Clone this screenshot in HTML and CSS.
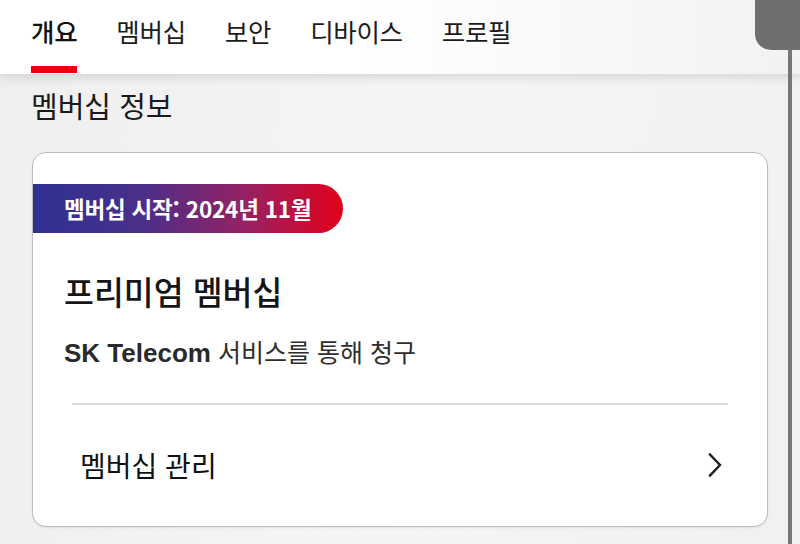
FILE: index.html
```html
<!DOCTYPE html>
<html lang="ko">
<head>
<meta charset="utf-8">
<title>멤버십 정보</title>
<link rel="stylesheet" href="styles.css">
</head>
<body>
<div class="page">
  <nav class="tabs">
    <div class="tab active"><span class="tab-label">개요</span><span class="tab-bar"></span></div>
    <div class="tab"><span class="tab-label">멤버십</span><span class="tab-bar"></span></div>
    <div class="tab"><span class="tab-label">보안</span><span class="tab-bar"></span></div>
    <div class="tab"><span class="tab-label">디바이스</span><span class="tab-bar"></span></div>
    <div class="tab"><span class="tab-label">프로필</span><span class="tab-bar"></span></div>
  </nav>
  <main class="content">
    <h2 class="section-title">멤버십 정보</h2>
    <section class="card">
      <div class="badge">멤버십 시작: 2024년 11월</div>
      <h3 class="plan">프리미엄 멤버십</h3>
      <p class="billing"><span class="brand">SK Telecom</span> 서비스를 통해 청구</p>
      <div class="divider"></div>
      <div class="manage-row">
        <span class="manage-label">멤버십 관리</span>
        <svg class="chevron" width="16" height="26" viewBox="0 0 16 26"><path d="M3 2.5 L13 13 L3 23.5" fill="none" stroke="#1e1e1e" stroke-width="2.4" stroke-linecap="square"/></svg>
      </div>
    </section>
  </main>
  <div class="edge-tab"></div>
  <div class="edge-line"></div>
</div>
</body>
</html>
```

FILE: styles.css
```css
* { box-sizing: border-box; }
html, body { margin: 0; padding: 0; }
body {
  font-family: "Noto Sans CJK KR", "Noto Sans", sans-serif;
  background: #f3f3f3;
  color: #111;
}
.page {
  position: relative;
  width: 800px;
  height: 544px;
  overflow: hidden;
  background: linear-gradient(100deg, #efefef 0%, #f5f5f5 50%, #f1f1f1 100%);
}
.tabs {
  display: flex;
  gap: 39px;
  height: 74px;
  padding-left: 31px;
  background: linear-gradient(90deg, #ffffff 0%, #ffffff 45%, #f2f2f2 100%);
  box-shadow: 0 3px 10px rgba(0, 0, 0, 0.13);
  position: relative;
  z-index: 1;
}
.tab {
  display: flex;
  flex-direction: column;
  padding-top: 12px;
}
.tab-label {
  font-size: 25.5px;
  line-height: 38px;
  color: #1c1c1c;
  letter-spacing: -0.3px;
}
.tab.active .tab-label { font-weight: 500; color: #111; }
.tab-bar {
  margin-top: auto;
  margin-bottom: 1px;
  height: 7px;
}
.tab.active .tab-bar { background: #e8000f; }
.content {
  padding: 12px 32px 0 32px;
}
.section-title {
  margin: 0 0 28px -1px;
  font-size: 29px;
  line-height: 38px;
  font-weight: 400;
  color: #1a1a1a;
}
.card {
  width: 736px;
  height: 375px;
  background: #fff;
  border: 1px solid #bdbdbd;
  border-radius: 14px;
  padding-top: 31px;
  box-shadow: 0 1px 2px rgba(0, 0, 0, 0.08);
}
.badge {
  width: 310px;
  height: 49px;
  line-height: 49px;
  padding-left: 31px;
  border-radius: 0 25px 25px 0;
  background: linear-gradient(90deg, #2e3192 0%, #4a2f8a 35%, #9a2060 70%, #e3001a 100%);
  color: #fff;
  font-size: 22.5px;
  font-weight: 700;
  letter-spacing: -0.2px;
}
.plan {
  margin: 37px 0 0 31px;
  font-size: 32.5px;
  line-height: 42px;
  font-weight: 500;
  color: #151515;
}
.billing {
  margin: 23px 0 0 31px;
  font-size: 25px;
  line-height: 32px;
  font-weight: 400;
  color: #2e2e2e;
}
.brand {
  font-family: "Liberation Sans", "Noto Sans", sans-serif;
  font-weight: 700;
  font-size: 26px;
  color: #2a2a2a;
}
.divider {
  margin: 34px 39px 0 39px;
  height: 2px;
  background: #dcdcdc;
}
.manage-row {
  display: flex;
  align-items: center;
  justify-content: space-between;
  height: 120px;
  padding: 0 44px 0 47px;
}
.manage-label {
  font-size: 28px;
  line-height: 38px;
  color: #111;
  letter-spacing: 0;
}
.edge-tab {
  position: absolute;
  top: 0;
  right: 0;
  width: 45px;
  height: 50px;
  background: #6f6f6f;
  border-bottom-left-radius: 16px;
  z-index: 2;
}
.edge-line {
  position: absolute;
  top: 50px;
  right: 8px;
  width: 4px;
  height: 494px;
  background: #777;
  z-index: 2;
}
```
